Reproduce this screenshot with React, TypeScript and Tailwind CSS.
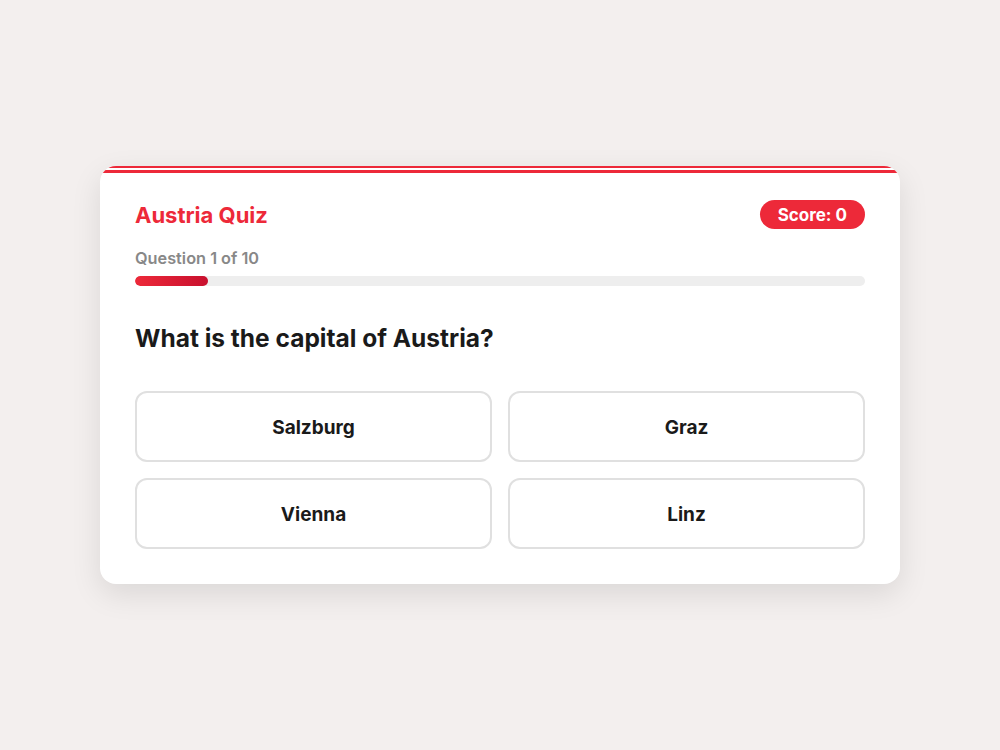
import React from "react";

const options = ["Salzburg", "Graz", "Vienna", "Linz"];

export default function App() {
  const current = 1;
  const total = 10;
  const progress = (current / total) * 100;

  return (
    <div
      className="min-h-screen w-full bg-[#f3efee] flex items-center justify-center"
      style={{ fontFamily: "Inter, 'Noto Sans', sans-serif" }}
    >
      <div className="relative w-[800px] bg-white rounded-2xl overflow-hidden shadow-[0_10px_30px_rgba(0,0,0,0.10)] px-[35px] pt-[34px] pb-[35px]">
        {/* red-white-red flag stripe */}
        <div className="absolute top-0 left-0 right-0 h-[7px] bg-[linear-gradient(to_bottom,#ed2939_0%,#ed2939_33%,#ffffff_33%,#ffffff_58%,#ed2939_58%,#ed2939_100%)]" />

        <div className="flex items-center justify-between">
          <h1 className="text-[22px] font-bold text-[#ed2939] leading-7">
            Austria Quiz
          </h1>
          <div className="rounded-full bg-[#ed2939] text-white font-bold text-[17px] leading-5 px-[18px] py-[4.5px]">
            Score: 0
          </div>
        </div>

        <div className="mt-[19px]">
          <div className="text-[16.3px] font-semibold text-[#888888] leading-5">
            Question {current} of {total}
          </div>
          <div className="mt-[8px] h-[10px] w-full rounded-full bg-[#eeeeee] overflow-hidden">
            <div
              className="h-full rounded-full bg-[linear-gradient(to_right,#ed2939,#c8102e)]"
              style={{ width: `${progress}%` }}
            />
          </div>
        </div>

        <h2 className="mt-[36px] text-[24.5px] font-bold text-[#1a1a1a] leading-8">
          What is the capital of Austria?
        </h2>

        <div className="mt-[37px] grid grid-cols-2 gap-4">
          {options.map((o) => (
            <button
              key={o}
              className="h-[71px] pt-[3px] rounded-xl border-2 border-[#e0e0e0] bg-white text-[19px] font-bold text-[#1a1a1a]"
            >
              {o}
            </button>
          ))}
        </div>
      </div>
    </div>
  );
}
